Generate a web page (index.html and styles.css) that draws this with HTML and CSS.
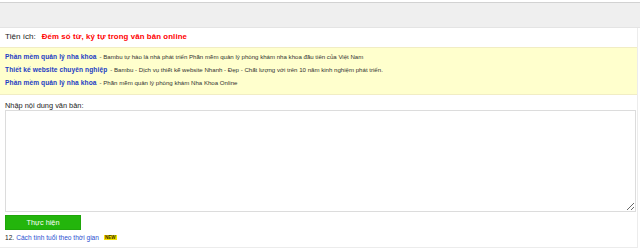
FILE: index.html
```html
<!DOCTYPE html>
<html lang="vi">
<head>
  <meta charset="UTF-8" />
  <meta name="viewport" content="width=device-width, initial-scale=1.0" />
  <title>Đếm số từ, ký tự trong văn bản online</title>
  <link rel="stylesheet" href="styles.css">
</head>
<body>

  <div class="topbar"></div>

  <div class="page">
    <div class="title-row">
      <span class="label">Tiện ích:</span>
      <h1>Đếm số từ, ký tự trong văn bản online</h1>
    </div>

    <!-- quảng cáo -->
    <div class="ads">
      <div class="ad-row">
        <a href="#">Phần mềm quản lý nha khoa</a>
        <span>- Bambu tự hào là nhà phát triển Phần mềm quản lý phòng khám nha khoa đầu tiên của Việt Nam</span>
      </div>
      <div class="ad-row">
        <a href="#">Thiết kế website chuyên nghiệp</a>
        <span>- Bambu - Dịch vụ thiết kế website Nhanh - Đẹp - Chất lượng với trên 10 năm kinh nghiệm phát triển.</span>
      </div>
      <div class="ad-row">
        <a href="#">Phần mềm quản lý nha khoa</a>
        <span>- Phần mềm quản lý phòng khám Nha Khoa Online</span>
      </div>
    </div>

    <div class="tool">
      <label for="content">Nhập nội dung văn bản:</label>
      <textarea id="content"></textarea>
      <button>Thực hiện</button>
      <div class="related">
        12. <a href="#">Cách tính tuổi theo thời gian</a>
        <span class="new">NEW</span>
      </div>
    </div>
  </div>

</body>
</html>
```

FILE: styles.css
```css
* {
  margin: 0;
  padding: 0;
  box-sizing: border-box;
  font-family: 'Liberation Sans', Arial, sans-serif;
}

body {
  background: #fff;
  width: 640px;
  height: 248px;
  overflow: hidden;
}

.topbar {
  margin-top: 2px;
  height: 26px;
  background: #efefef;
  border-top: 1px solid #d2d2d2;
  border-bottom: 1px solid #e4e4e4;
}

.page {
  width: 638px;
  border-right: 1px solid #ececec;
  border-bottom: 1px solid #ececec;
  padding-bottom: 6px;
}

.title-row {
  display: flex;
  align-items: baseline;
  gap: 6px;
  height: 19px;
  padding: 4px 0 0 5px;
}

.label {
  font-size: 8.1px;
  color: #222;
}

h1 {
  font-size: 7.8px;
  font-weight: bold;
  letter-spacing: 0.12px;
  color: #f00;
}

.ads {
  background: #ffffcd;
  border-top: 1px solid #f1edc4;
  border-bottom: 1px solid #f1edc4;
  padding: 4px 5px 7px;
  height: 48px;
}

.ad-row {
  display: flex;
  align-items: baseline;
  gap: 3px;
  height: 13px;
}

.ad-row:first-child {
  margin-top: 1px;
}

.ad-row:last-child {
  height: 12px;
}

.ad-row a {
  font-size: 6.6px;
  font-weight: bold;
  letter-spacing: 0.1px;
  color: #1c3cc4;
  text-decoration: none;
}

.ad-row span {
  font-size: 6.1px;
  color: #333;
}

.tool {
  padding: 6px 4px 0 5px;
}

.tool label {
  display: block;
  font-size: 7.4px;
  color: #222;
  height: 9px;
}

textarea {
  display: block;
  width: 631px;
  height: 102px;
  border: 1px solid #dcdcdc;
  resize: vertical;
}

button {
  display: block;
  width: 76px;
  height: 15px;
  margin-top: 3px;
  background: #23b50c;
  border: 1px solid #1fa60a;
  color: #fff;
  font-size: 7.3px;
}

.related {
  margin-top: 4px;
  font-size: 6.6px;
  color: #222;
  display: flex;
  align-items: center;
  gap: 2px;
}

.related a {
  color: #2a4fd0;
  text-decoration: none;
}

.new {
  margin-left: 3px;
  font-size: 4.6px;
  font-weight: bold;
  color: #3a2e00;
  background: #f6e200;
  padding: 0 1px;
  line-height: 5px;
}
```
